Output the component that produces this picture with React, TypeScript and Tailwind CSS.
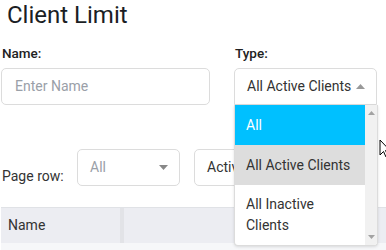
export default function App() {
    return (
        <div className="relative h-[250px] w-[386px] overflow-hidden bg-white font-['Roboto',sans-serif] text-[#222]">
            <h1 className="pl-[7px] pt-[1px] text-[24px] leading-[29px] text-[#1b1e24]">Client Limit</h1>

            <div className="mt-[15px] flex gap-[24px] pl-[1px]">
                <div className="w-[209px]">
                    <label className="block pl-[1px] text-[13.5px] font-medium leading-[16px]">Name:</label>
                    <div className="mt-[7px] flex h-[37px] items-center rounded-[5px] border border-[#dcdcdc] px-[13px] text-[14px] text-[#9aa0a8]">
                        Enter Name
                    </div>
                </div>
                <div className="relative w-[143px]">
                    <label className="block pl-[1px] text-[13.5px] font-medium leading-[16px]">Type:</label>
                    <div className="mt-[7px] flex h-[37px] items-center justify-between rounded-t-[5px] border border-[#dcdcdc] pl-[12px] pr-[11px] text-[14px] text-[#333]">
                        <span>All Active Clients</span>
                        <svg width="9" height="5" viewBox="0 0 9 5"><path d="M0 5L4.5 0L9 5Z" fill="#999" /></svg>
                    </div>
                    <div className="absolute left-0 top-[60px] z-10 flex h-[141px] w-[144px] overflow-hidden rounded-b-[4px] border border-t-0 border-[#dcdcdc] bg-white shadow-[0_1px_3px_rgba(0,0,0,0.12)]">
                        <ul className="w-[131px] text-[14px] leading-[21px] text-[#333]">
                            <li className="flex h-[40px] items-center bg-[#00c0ff] pl-[11px] text-white">All</li>
                            <li className="flex h-[40px] items-center bg-[#dddddd] pl-[11px]">All Active Clients</li>
                            <li className="pl-[11px] pr-[14px] pt-[9px]">All Inactive Clients</li>
                        </ul>
                        <div className="flex w-[12px] flex-col items-center justify-between bg-[#f1f1f1] py-[6px]">
                            <svg width="7" height="4" viewBox="0 0 7 4"><path d="M0 4L3.5 0L7 4Z" fill="#a3a3a3" /></svg>
                            <svg width="7" height="4" viewBox="0 0 7 4"><path d="M0 0L3.5 4L7 0Z" fill="#a3a3a3" /></svg>
                        </div>
                    </div>
                </div>
            </div>

            <div className="mt-[43px] flex items-center pl-[2px]">
                <span className="mt-[18px] w-[75px] text-[14px] text-[#333]">Page row:</span>
                <div className="flex h-[37px] w-[103px] items-center justify-between rounded-[5px] border border-[#dcdcdc] pl-[12px] pr-[11px] text-[14px] text-[#9aa0a8]">
                    <span>All</span>
                    <svg width="9" height="5" viewBox="0 0 9 5"><path d="M0 0L4.5 5L9 0Z" fill="#888" /></svg>
                </div>
                <div className="ml-[14px] flex h-[37px] w-[150px] items-center rounded-[5px] border border-[#dcdcdc] pl-[12px] text-[14px] text-[#333]">
                    Active
                </div>
            </div>

            <div className="ml-[1px] mt-[20px] flex h-[36px] border-t border-[#e0e2e6] bg-[#ecedf2] text-[14px] text-[#333]">
                <div className="flex w-[123px] items-center border-r-[4px] border-[#e2e3e7] pl-[7px]">Name</div>
                <div className="flex-1" />
            </div>
            <div className="ml-[1px] h-[10px] bg-[#f6f7f9]" />

            <svg className="absolute left-[379px] top-[139px] z-20" width="12" height="19" viewBox="0 0 12 19">
                <path d="M1 1L1 16L4.5 12.5L7 18L9 17L6.5 11.5L11 11.5Z" fill="#fff" stroke="#000" strokeWidth="1" />
            </svg>
        </div>
    );
}
